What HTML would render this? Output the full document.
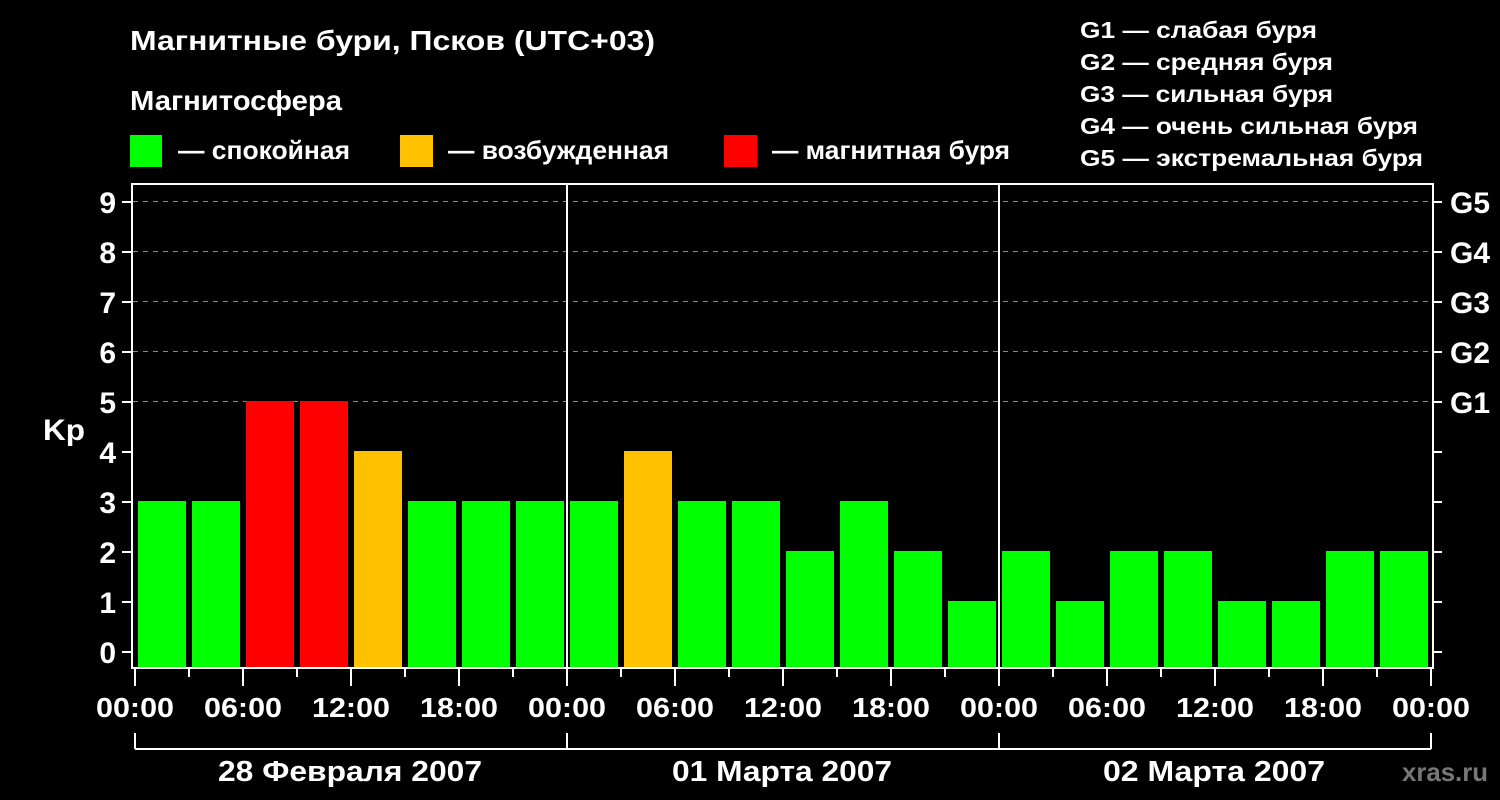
<!DOCTYPE html>
<html><head><meta charset="utf-8"><style>
html,body{margin:0;padding:0;background:#000;width:1500px;height:800px;overflow:hidden}
svg{display:block}
text{font-family:"Liberation Sans","Noto Sans CJK JP",sans-serif;font-weight:bold;fill:#fff}
</style></head><body>
<svg width="1500" height="800" viewBox="0 0 1500 800" xmlns="http://www.w3.org/2000/svg">
<rect width="1500" height="800" fill="#000"/>
<text x="130" y="50" font-size="28" textLength="525" lengthAdjust="spacingAndGlyphs">Магнитные бури, Псков (UTC+03)</text>
<text x="130" y="110" font-size="28" textLength="212" lengthAdjust="spacingAndGlyphs">Магнитосфера</text>
<rect x="130" y="135" width="32" height="32" fill="#00ff00"/>
<text x="178" y="159" font-size="26" textLength="172" lengthAdjust="spacingAndGlyphs">— спокойная</text>
<rect x="400" y="135" width="33" height="32" fill="#ffc000"/>
<text x="448" y="159" font-size="26" textLength="221" lengthAdjust="spacingAndGlyphs">— возбужденная</text>
<rect x="724" y="135" width="33" height="32" fill="#ff0000"/>
<text x="772" y="159" font-size="26" textLength="238" lengthAdjust="spacingAndGlyphs">— магнитная буря</text>
<g font-size="23">
<text x="1080" y="38" textLength="237" lengthAdjust="spacingAndGlyphs">G1 — слабая буря</text>
<text x="1080" y="70" textLength="253" lengthAdjust="spacingAndGlyphs">G2 — средняя буря</text>
<text x="1080" y="102" textLength="253" lengthAdjust="spacingAndGlyphs">G3 — сильная буря</text>
<text x="1080" y="134" textLength="338" lengthAdjust="spacingAndGlyphs">G4 — очень сильная буря</text>
<text x="1080" y="166" textLength="343" lengthAdjust="spacingAndGlyphs">G5 — экстремальная буря</text>
</g>
<g stroke="#888" stroke-width="1" stroke-dasharray="5,5">
<line x1="133" y1="201.5" x2="1433" y2="201.5"/>
<line x1="133" y1="251.5" x2="1433" y2="251.5"/>
<line x1="133" y1="301.5" x2="1433" y2="301.5"/>
<line x1="133" y1="351.5" x2="1433" y2="351.5"/>
<line x1="133" y1="401.5" x2="1433" y2="401.5"/>
</g>
<g>
<rect x="138" y="501" width="48" height="167" fill="#00ff00"/>
<rect x="192" y="501" width="48" height="167" fill="#00ff00"/>
<rect x="246" y="401" width="48" height="267" fill="#ff0000"/>
<rect x="300" y="401" width="48" height="267" fill="#ff0000"/>
<rect x="354" y="451" width="48" height="217" fill="#ffc000"/>
<rect x="408" y="501" width="48" height="167" fill="#00ff00"/>
<rect x="462" y="501" width="48" height="167" fill="#00ff00"/>
<rect x="516" y="501" width="48" height="167" fill="#00ff00"/>
<rect x="570" y="501" width="48" height="167" fill="#00ff00"/>
<rect x="624" y="451" width="48" height="217" fill="#ffc000"/>
<rect x="678" y="501" width="48" height="167" fill="#00ff00"/>
<rect x="732" y="501" width="48" height="167" fill="#00ff00"/>
<rect x="786" y="551" width="48" height="117" fill="#00ff00"/>
<rect x="840" y="501" width="48" height="167" fill="#00ff00"/>
<rect x="894" y="551" width="48" height="117" fill="#00ff00"/>
<rect x="948" y="601" width="48" height="67" fill="#00ff00"/>
<rect x="1002" y="551" width="48" height="117" fill="#00ff00"/>
<rect x="1056" y="601" width="48" height="67" fill="#00ff00"/>
<rect x="1110" y="551" width="48" height="117" fill="#00ff00"/>
<rect x="1164" y="551" width="48" height="117" fill="#00ff00"/>
<rect x="1218" y="601" width="48" height="67" fill="#00ff00"/>
<rect x="1272" y="601" width="48" height="67" fill="#00ff00"/>
<rect x="1326" y="551" width="48" height="117" fill="#00ff00"/>
<rect x="1380" y="551" width="48" height="117" fill="#00ff00"/>
</g>
<g stroke="#fff" stroke-width="2" fill="none">
<rect x="132" y="184" width="1301" height="484"/>
<line x1="567" y1="184" x2="567" y2="668"/>
<line x1="999" y1="184" x2="999" y2="668"/>
<path d="M122 652h9M122 602h9M122 552h9M122 502h9M122 452h9M122 402h9M122 352h9M122 302h9M122 252h9M122 202h9"/>
<path d="M1434 652h8M1434 602h8M1434 552h8M1434 502h8M1434 452h8M1434 402h8M1434 352h8M1434 302h8M1434 252h8M1434 202h8"/>
<path d="M135 669v17M243 669v17M351 669v17M459 669v17M567 669v17M675 669v17M783 669v17M891 669v17M999 669v17M1107 669v17M1215 669v17M1323 669v17M1431 669v17"/>
<path d="M189 669v8M297 669v8M405 669v8M513 669v8M621 669v8M729 669v8M837 669v8M945 669v8M1053 669v8M1161 669v8M1269 669v8M1377 669v8"/>
<path d="M135 733v16M567 733v16M999 733v16M1431 733v16M135 749H1431"/>
</g>
<g font-size="30" text-anchor="end">
<text x="116" y="663">0</text><text x="116" y="613">1</text><text x="116" y="563">2</text>
<text x="116" y="513">3</text><text x="116" y="463">4</text><text x="116" y="413">5</text>
<text x="116" y="363">6</text><text x="116" y="313">7</text><text x="116" y="263">8</text>
<text x="116" y="213">9</text>
</g>
<text x="43" y="440" font-size="30" textLength="42" lengthAdjust="spacingAndGlyphs">Kp</text>
<g font-size="30">
<text x="1450" y="413" textLength="40" lengthAdjust="spacingAndGlyphs">G1</text>
<text x="1450" y="363" textLength="40" lengthAdjust="spacingAndGlyphs">G2</text>
<text x="1450" y="313" textLength="40" lengthAdjust="spacingAndGlyphs">G3</text>
<text x="1450" y="263" textLength="40" lengthAdjust="spacingAndGlyphs">G4</text>
<text x="1450" y="213" textLength="40" lengthAdjust="spacingAndGlyphs">G5</text>
</g>
<g font-size="28">
<text x="96" y="717" textLength="78" lengthAdjust="spacingAndGlyphs">00:00</text>
<text x="204" y="717" textLength="78" lengthAdjust="spacingAndGlyphs">06:00</text>
<text x="312" y="717" textLength="78" lengthAdjust="spacingAndGlyphs">12:00</text>
<text x="420" y="717" textLength="78" lengthAdjust="spacingAndGlyphs">18:00</text>
<text x="528" y="717" textLength="78" lengthAdjust="spacingAndGlyphs">00:00</text>
<text x="636" y="717" textLength="78" lengthAdjust="spacingAndGlyphs">06:00</text>
<text x="744" y="717" textLength="78" lengthAdjust="spacingAndGlyphs">12:00</text>
<text x="852" y="717" textLength="78" lengthAdjust="spacingAndGlyphs">18:00</text>
<text x="960" y="717" textLength="78" lengthAdjust="spacingAndGlyphs">00:00</text>
<text x="1068" y="717" textLength="78" lengthAdjust="spacingAndGlyphs">06:00</text>
<text x="1176" y="717" textLength="78" lengthAdjust="spacingAndGlyphs">12:00</text>
<text x="1284" y="717" textLength="78" lengthAdjust="spacingAndGlyphs">18:00</text>
<text x="1392" y="717" textLength="78" lengthAdjust="spacingAndGlyphs">00:00</text>
</g>
<g font-size="29">
<text x="218" y="781" textLength="264" lengthAdjust="spacingAndGlyphs">28 Февраля 2007</text>
<text x="672" y="781" textLength="220" lengthAdjust="spacingAndGlyphs">01 Марта 2007</text>
<text x="1103" y="781" textLength="222" lengthAdjust="spacingAndGlyphs">02 Марта 2007</text>
</g>
<text x="1402" y="781" font-size="26" style="fill:#777" textLength="86" lengthAdjust="spacingAndGlyphs">xras.ru</text>
</svg>
</body></html>
